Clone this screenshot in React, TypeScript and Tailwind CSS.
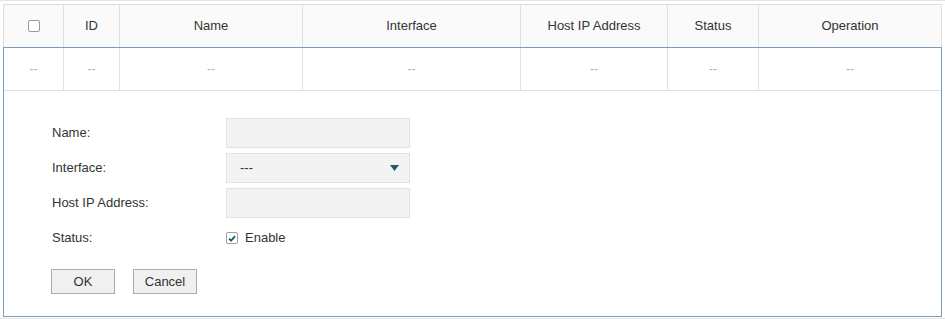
import type React from 'react';

const FONT = { fontFamily: '"Liberation Sans", Arial, sans-serif' };

interface Column {
  key: string;
  label: string;
  width: string;
}

const COLUMNS: Column[] = [
  { key: 'check', label: '', width: 'w-[60px]' },
  { key: 'id', label: 'ID', width: 'w-[56px]' },
  { key: 'name', label: 'Name', width: 'w-[183px]' },
  { key: 'iface', label: 'Interface', width: 'w-[218px]' },
  { key: 'host', label: 'Host IP Address', width: 'w-[147px]' },
  { key: 'status', label: 'Status', width: 'w-[91px]' },
  { key: 'op', label: 'Operation', width: 'flex-1' },
];

function EmptyBox() {
  return <span className="block w-[12px] h-[12px] rounded-[2px] border border-[#9a9a9a] bg-white" />;
}

function CheckedBox() {
  return (
    <span className="flex items-center justify-center w-[12px] h-[12px] rounded-[2px] border border-[#a0a0a0] bg-white">
      <svg width="8" height="7" viewBox="0 0 8 7">
        <path d="M1 3.6 L3.1 5.6 L7 1.2" fill="none" stroke="#1d5a6a" strokeWidth="1.8" />
      </svg>
    </span>
  );
}

function FormRow({ label, children }: { label: string; children: React.ReactNode }) {
  return (
    <div className="flex items-center h-[30px]">
      <span className="w-[174px] text-[13px] text-[#333]">{label}</span>
      {children}
    </div>
  );
}

function TextBox() {
  return <div className="w-[184px] h-[30px] border border-[#e2e2e2] bg-[#f3f3f3]" />;
}

export default function App() {
  return (
    <div
      style={FONT}
      className="w-[945px] h-[319px] bg-white border-t border-b border-[#e3e3e3] pt-[3px] pl-[3px]"
    >
      <div className="w-[939px]">
        <div className="flex h-[43px] bg-[#fafafa] border-t border-l border-r border-[#dedede]">
          {COLUMNS.map((col, i) => (
            <div
              key={col.key}
              className={`${col.width} flex items-center justify-center text-[13px] text-[#333] ${
                i < COLUMNS.length - 1 ? 'border-r border-[#dedede]' : ''
              }`}
            >
              {col.key === 'check' ? <EmptyBox /> : col.label}
            </div>
          ))}
        </div>

        <div className="h-[270px] border border-[#7f9cb4]">
          <div className="flex h-[43px] border-b border-[#e0e0e0]">
            {COLUMNS.map((col, i) => (
              <div
                key={col.key}
                className={`${col.width} flex items-center justify-center text-[12px] text-[#b0b0b0] ${
                  i < COLUMNS.length - 1 ? 'border-r border-[#e0e0e0]' : ''
                }`}
              >
                --
              </div>
            ))}
          </div>

          <div className="pl-[48px] pt-[27px] flex flex-col gap-[5px]">
            <FormRow label="Name:">
              <TextBox />
            </FormRow>
            <FormRow label="Interface:">
              <div className="w-[184px] h-[30px] border border-[#e2e2e2] bg-[#f3f3f3] flex items-center justify-between pl-[13px] pr-[10px]">
                <span className="text-[13px] text-[#333]">---</span>
                <svg width="9" height="6" viewBox="0 0 9 6">
                  <path d="M0 0 H9 L4.5 6 Z" fill="#1b5b6b" />
                </svg>
              </div>
            </FormRow>
            <FormRow label="Host IP Address:">
              <TextBox />
            </FormRow>
            <FormRow label="Status:">
              <label className="flex items-center gap-[7px] text-[13px] text-[#333]">
                <CheckedBox />
                Enable
              </label>
            </FormRow>

            <div className="flex gap-[18px] mt-[11px] -ml-[1px]">
              <button className="w-[64px] h-[25px] border border-[#adadad] bg-[#f0f0f0] text-[13px] text-[#333]">
                OK
              </button>
              <button className="w-[64px] h-[25px] border border-[#adadad] bg-[#f0f0f0] text-[13px] text-[#333]">
                Cancel
              </button>
            </div>
          </div>
        </div>
      </div>
    </div>
  );
}
